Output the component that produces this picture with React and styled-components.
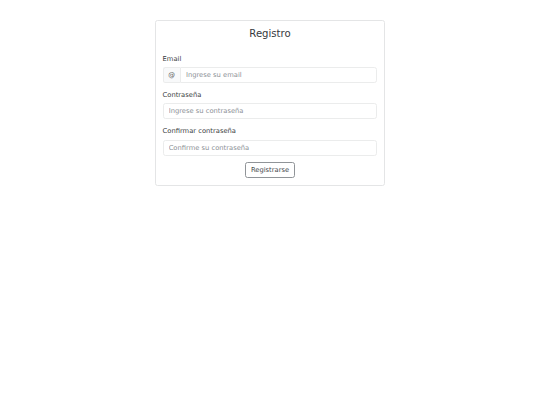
import React from "react";
import styled, { createGlobalStyle } from "styled-components";

const k = 0.421875;
const s = (v) => `${(v * k).toFixed(3)}px`;

const Global = createGlobalStyle`
  html, body { margin: 0; padding: 0; background: #ffffff; }
  body {
    font-family: "DejaVu Sans", sans-serif;
    font-size: ${s(16)};
    line-height: 1.5;
    color: #3a3e42;
  }
  * { box-sizing: border-box; }
`;

const Card = styled.div`
  width: ${s(546)};
  margin: ${s(48)} auto 0;
  border: 1px solid #e4e5e6;
  border-radius: ${s(6)};
  padding: ${s(16)};
  background: #fff;
`;

const Title = styled.h4`
  margin: 0 0 ${s(32)};
  font-size: ${s(24)};
  line-height: 1.2;
  font-weight: 400;
  text-align: center;
  color: #35393d;
`;

const Field = styled.div`
  margin-bottom: ${s(16)};
`;

const Label = styled.label`
  display: block;
  font-size: ${s(16)};
  line-height: ${s(24)};
  margin-bottom: ${s(8)};
  color: #3a3e42;
`;

const Group = styled.div`
  display: flex;
  align-items: stretch;
  width: 100%;
`;

const Addon = styled.span`
  display: flex;
  align-items: center;
  justify-content: center;
  width: ${s(41)};
  height: ${s(38)};
  background: #f8f9fa;
  border: 1px solid #ebecec;
  border-right: none;
  border-radius: ${s(6)} 0 0 ${s(6)};
  font-size: ${s(16)};
  color: #55595d;
`;

const Input = styled.input`
  display: block;
  flex: 1;
  width: 100%;
  min-width: 0;
  height: ${s(38)};
  padding: 0 ${s(12)};
  border: 1px solid #ebecec;
  border-radius: ${(p) => (p.$joined ? `0 ${s(6)} ${s(6)} 0` : s(6))};
  font-family: "DejaVu Sans", sans-serif;
  font-size: ${s(16)};
  color: #3a3e42;
  background: #fff;
  outline: none;
  &::placeholder { color: #8c9196; opacity: 1; }
`;

const Actions = styled.div`
  text-align: center;
`;

const Button = styled.button`
  display: inline-block;
  height: ${s(38)};
  padding: 0 ${s(12)};
  border: 1px solid #909498;
  border-radius: ${s(6)};
  background: #fff;
  font-family: "DejaVu Sans", sans-serif;
  font-size: ${s(16)};
  line-height: 1;
  color: #44484c;
  cursor: pointer;
`;

export default function App() {
  return (
    <>
      <Global />
      <Card>
        <Title>Registro</Title>
        <form onSubmit={(e) => e.preventDefault()}>
          <Field>
            <Label htmlFor="email">Email</Label>
            <Group>
              <Addon>@</Addon>
              <Input id="email" type="email" placeholder="Ingrese su email" $joined />
            </Group>
          </Field>
          <Field>
            <Label htmlFor="pass">Contraseña</Label>
            <Input id="pass" type="password" placeholder="Ingrese su contraseña" />
          </Field>
          <Field>
            <Label htmlFor="pass2">Confirmar contraseña</Label>
            <Input id="pass2" type="password" placeholder="Confirme su contraseña" />
          </Field>
          <Actions>
            <Button type="submit">Registrarse</Button>
          </Actions>
        </form>
      </Card>
    </>
  );
}
